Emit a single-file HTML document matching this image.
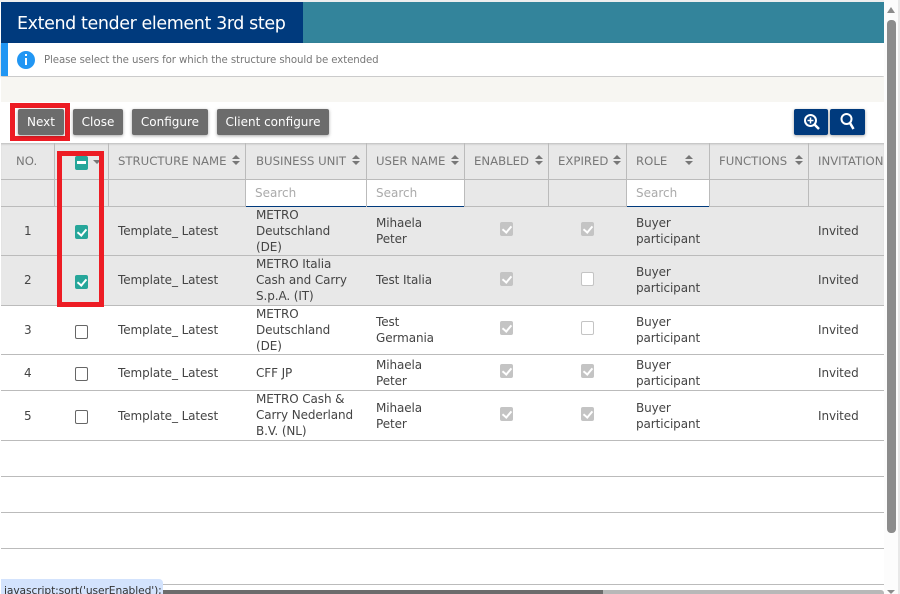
<!DOCTYPE html>
<html><head><meta charset="utf-8"><style>
html,body{margin:0;padding:0;width:900px;height:594px;overflow:hidden;background:#fff}
body{position:relative;font:12px/16px "DejaVu Sans",sans-serif;color:#444}
div,span{position:absolute;box-sizing:border-box}
.t{white-space:nowrap;letter-spacing:-.1px;margin-top:1px}
.h{white-space:nowrap;color:#777;font-size:11.7px;line-height:16px;top:153px;margin-top:0}
.s{white-space:nowrap;color:#aaa;top:185px}
.b{top:109px;height:26px;background:#6c6c6c;color:#fff;border-radius:2px;box-shadow:0 1px 3px rgba(0,0,0,.35);text-align:center;line-height:26px}
.hl{left:1px;width:883px;height:1px;background:#bbb}
.vl{top:143px;height:63px;width:1px;background:#bbb}
.in{background:#fff;top:180px;height:27px;border-bottom:1px solid #003a7d}
.so{width:9px;height:11px;top:155px}
.so:before{content:"";position:absolute;left:0;top:0;border:4.5px solid transparent;border-top:0;border-bottom:4.5px solid #777}
.so:after{content:"";position:absolute;left:0;top:6px;border:4.5px solid transparent;border-bottom:0;border-top:4.5px solid #777}
.c{width:13px;height:14px;border-radius:2px}
.c.on:after,.c.dis:after{content:"";position:absolute;left:3.5px;top:2px;width:4px;height:7px;border:solid #fff;border-width:0 2px 2px 0;transform:rotate(40deg)}
.on{left:75px;background:#26a69a}
.off{left:75px;border:1px solid #666;background:#fff}
.dis{background:#c4c4c4}
.emp{background:#fff;border:1.5px solid #c4c4c4}
.red{border:5px solid #ed1c24}
</style></head><body>
<div style="left:0;top:0;width:885px;height:2px;background:#eee"></div>
<div style="left:1px;top:2px;width:302px;height:41px;background:#003a7d"></div>
<div style="left:303px;top:2px;width:581px;height:41px;background:#33849b"></div>
<div class="t" style="left:17px;top:11px;color:#fff;font-size:17.5px;line-height:24px;letter-spacing:-.4px">Extend tender element 3rd step</div>

<div style="left:1px;top:43px;width:883px;height:33px;background:#fff;box-shadow:0 1px 2px rgba(0,0,0,.3)"></div>
<div style="left:1px;top:43px;width:7px;height:33px;background:#2196f3"></div>
<div style="left:17px;top:51px;width:18px;height:18px;border-radius:50%;background:#2196f3"></div>
<div style="left:25px;top:54px;width:2px;height:2px;background:#fff"></div>
<div style="left:25px;top:58px;width:2px;height:7px;background:#fff"></div>
<div class="t" style="left:44px;top:52px;font-size:10.2px;color:#777">Please select the users for which the structure should be extended</div>

<div style="left:1px;top:77px;width:883px;height:25px;background:#f7f6f2"></div>

<div class="red" style="left:10px;top:103px;width:60px;height:38px"></div>
<div class="b" style="left:18px;width:46px">Next</div>
<div class="b" style="left:73px;width:50px">Close</div>
<div class="b" style="left:132px;width:76px">Configure</div>
<div class="b" style="left:217px;width:112px">Client configure</div>
<div class="b" style="left:794px;width:34px;background:#003a7d"></div>
<div class="b" style="left:830px;width:35px;background:#003a7d"></div>
<svg style="position:absolute;left:794px;top:109px" width="71" height="26" viewBox="0 0 71 26" fill="none" stroke="#fff">
<circle cx="16.500" cy="11.500" r="5.500" stroke-width="2"/><path d="M20.500 15.500L25 20" stroke-width="2.500"/><path d="M13.500 11.500h6M16.500 8.500v6" stroke-width="1.500"/>
<circle cx="52.500" cy="10" r="5" stroke-width="2"/><path d="M56 14L59.500 20" stroke-width="2.500"/></svg>

<div style="left:1px;top:143px;width:883px;height:113px;background:#e8e8e8;box-shadow:inset 0 2px 2px -1px rgba(0,0,0,.2)"></div>
<div style="left:1px;top:256px;width:883px;height:49px;background:#e8e8e8"></div>
<div class="in" style="left:246px;width:120px"></div>
<div class="in" style="left:367px;width:97px"></div>
<div class="in" style="left:627px;width:82px"></div>

<div class="hl" style="top:179px"></div>
<div class="hl" style="top:206px;background:#bbb"></div>
<div class="in" style="left:246px;width:120px;height:1px;top:206px;border:0;background:#003a7d"></div>
<div class="in" style="left:367px;width:97px;height:1px;top:206px;border:0;background:#003a7d"></div>
<div class="in" style="left:627px;width:82px;height:1px;top:206px;border:0;background:#003a7d"></div>
<div class="vl" style="left:54px"></div><div class="vl" style="left:108px"></div><div class="vl" style="left:245px"></div><div class="vl" style="left:366px"></div><div class="vl" style="left:464px"></div><div class="vl" style="left:548px"></div><div class="vl" style="left:626px"></div><div class="vl" style="left:709px"></div><div class="vl" style="left:808px"></div>
<div class="hl" style="top:255px"></div><div class="hl" style="top:305px"></div><div class="hl" style="top:354px"></div><div class="hl" style="top:390px"></div><div class="hl" style="top:440px"></div><div class="hl" style="top:476px"></div><div class="hl" style="top:512px"></div><div class="hl" style="top:548px"></div><div class="hl" style="top:584px"></div>

<div class="h" style="left:16px">NO.</div>
<div class="h" style="left:118px">STRUCTURE NAME</div>
<div class="h" style="left:256px">BUSINESS UNIT</div>
<div class="h" style="left:376px">USER NAME</div>
<div class="h" style="left:474px">ENABLED</div>
<div class="h" style="left:558px">EXPIRED</div>
<div class="h" style="left:636px">ROLE</div>
<div class="h" style="left:719px">FUNCTIONS</div>
<div style="left:809px;top:143px;width:75px;height:36px;overflow:hidden"><div class="h" style="left:9px;top:10px">INVITATION STATUS</div></div>
<div class="so" style="left:232px"></div><div class="so" style="left:352px"></div><div class="so" style="left:451px"></div><div class="so" style="left:535px"></div><div class="so" style="left:613px"></div><div class="so" style="left:685px"></div><div class="so" style="left:795px"></div>
<div style="left:93px;top:160px;border:4px solid transparent;border-bottom:0;border-top:4px solid #777"></div>
<div class="c" style="left:75px;top:156px;background:#26a69a"></div>
<div style="left:77px;top:161px;width:9px;height:3px;background:#fff"></div>
<div class="s" style="left:255px">Search</div><div class="s" style="left:376px">Search</div><div class="s" style="left:636px">Search</div>

<div class="t" style="left:24px;top:222px">1</div>
<div class="t" style="left:24px;top:271px">2</div>
<div class="t" style="left:24px;top:321px">3</div>
<div class="t" style="left:24px;top:364px">4</div>
<div class="t" style="left:24px;top:407px">5</div>

<div class="c on" style="top:225px"></div><div class="c on" style="top:275px"></div><div class="c off" style="top:325px"></div><div class="c off" style="top:367px"></div><div class="c off" style="top:410px"></div>

<div class="t" style="left:118px;top:222px">Template_ Latest</div>
<div class="t" style="left:118px;top:271px">Template_ Latest</div>
<div class="t" style="left:118px;top:321px">Template_ Latest</div>
<div class="t" style="left:118px;top:364px">Template_ Latest</div>
<div class="t" style="left:118px;top:407px">Template_ Latest</div>

<div class="t" style="left:256px;top:206px">METRO<br>Deutschland<br>(DE)</div>
<div class="t" style="left:256px;top:255px">METRO Italia<br>Cash and Carry<br>S.p.A. (IT)</div>
<div class="t" style="left:256px;top:305px">METRO<br>Deutschland<br>(DE)</div>
<div class="t" style="left:256px;top:364px">CFF JP</div>
<div class="t" style="left:256px;top:390px">METRO Cash &amp;<br>Carry Nederland<br>B.V. (NL)</div>

<div class="t" style="left:376px;top:214px">Mihaela<br>Peter</div>
<div class="t" style="left:376px;top:271px">Test Italia</div>
<div class="t" style="left:376px;top:313px">Test<br>Germania</div>
<div class="t" style="left:376px;top:356px">Mihaela<br>Peter</div>
<div class="t" style="left:376px;top:399px">Mihaela<br>Peter</div>

<div class="c dis" style="left:500px;top:222px"></div><div class="c dis" style="left:500px;top:272px"></div><div class="c dis" style="left:500px;top:321px"></div><div class="c dis" style="left:500px;top:364px"></div><div class="c dis" style="left:500px;top:407px"></div>
<div class="c dis" style="left:581px;top:222px"></div><div class="c emp" style="left:581px;top:272px"></div><div class="c emp" style="left:581px;top:321px"></div><div class="c dis" style="left:581px;top:364px"></div><div class="c dis" style="left:581px;top:407px"></div>

<div class="t" style="left:636px;top:214px">Buyer<br>participant</div>
<div class="t" style="left:636px;top:263px">Buyer<br>participant</div>
<div class="t" style="left:636px;top:313px">Buyer<br>participant</div>
<div class="t" style="left:636px;top:356px">Buyer<br>participant</div>
<div class="t" style="left:636px;top:399px">Buyer<br>participant</div>

<div class="t" style="left:818px;top:222px">Invited</div>
<div class="t" style="left:818px;top:271px">Invited</div>
<div class="t" style="left:818px;top:321px">Invited</div>
<div class="t" style="left:818px;top:364px">Invited</div>
<div class="t" style="left:818px;top:407px">Invited</div>

<div class="red" style="left:57px;top:151px;width:47px;height:156px"></div>

<div style="left:884px;top:0;width:14px;height:594px;background:#fcfcfc"></div>
<div style="left:898px;top:0;width:2px;height:594px;background:#e8e8e8"></div>
<div style="left:887px;top:20px;width:9px;height:513px;border-radius:4px;background:#8c8c8c"></div>
<div style="left:887px;top:7px;border:4.500px solid transparent;border-top:0;border-bottom:6px solid #8c8c8c"></div>
<div style="left:887px;top:590px;border:4px solid transparent;border-bottom:0;border-top:4px solid #8c8c8c"></div>

<div style="left:163px;top:590px;width:721px;height:4px;background:#b8b8b8;border-radius:3px 3px 0 0"></div>
<div style="left:163px;top:590px;width:440px;height:4px;background:#6c6c6c"></div>
<div style="left:1px;top:579px;width:162px;height:15px;background:#d3e3fd;border-radius:0 4px 0 0;overflow:hidden"><div class="t" style="left:3px;top:3px;font-size:10.7px;color:#333">javascript:sort('userEnabled');</div></div>
</body></html>
